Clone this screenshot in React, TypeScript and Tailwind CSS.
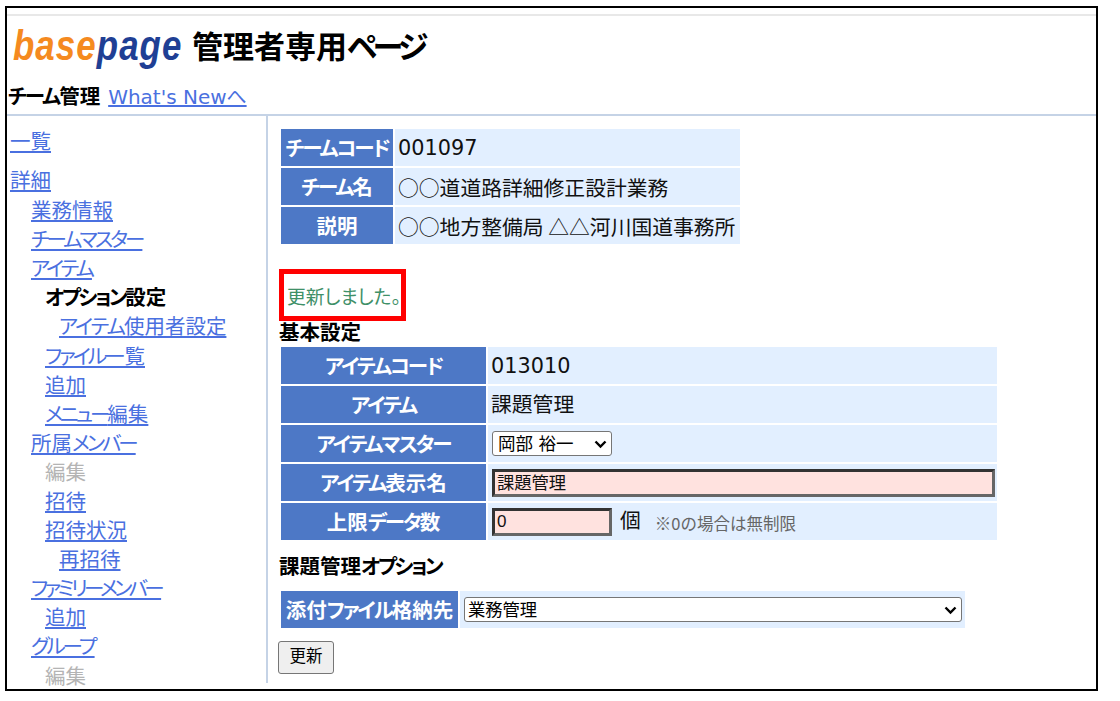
const Kana = ({ t, cls = "tracking-[-2px]" }: { t: string; cls?: string }) => {
  const parts = t.split(/([ァ-ヶー]+)/);
  return (
    <>
      {parts.map((p, i) =>
        /^[ァ-ヶー]+$/.test(p) ? (
          <span key={i} className={`${cls} [font-feature-settings:'palt']`}>{p}</span>
        ) : (
          <span key={i}>{p}</span>
        )
      )}
    </>
  );
};

const nav: { t: string; pl: string; kind: "link" | "cur" | "off"; cls?: string }[] = [
  { t: "業務情報", pl: "pl-[21px]", kind: "link" },
  { t: "チームマスター", pl: "pl-[21px]", kind: "link" },
  { t: "アイテム", pl: "pl-[21px]", kind: "link" },
  { t: "オプション設定", pl: "pl-[35px]", kind: "cur" },
  { t: "アイテム使用者設定", pl: "pl-[49px]", kind: "link", cls: "tracking-[-2px]" },
  { t: "ファイル一覧", pl: "pl-[35px]", kind: "link" },
  { t: "追加", pl: "pl-[35px]", kind: "link" },
  { t: "メニュー編集", pl: "pl-[35px]", kind: "link" },
  { t: "所属メンバー", pl: "pl-[21px]", kind: "link" },
  { t: "編集", pl: "pl-[35px]", kind: "off" },
  { t: "招待", pl: "pl-[35px]", kind: "link" },
  { t: "招待状況", pl: "pl-[35px]", kind: "link" },
  { t: "再招待", pl: "pl-[49px]", kind: "link" },
  { t: "ファミリーメンバー", pl: "pl-[21px]", kind: "link", cls: "tracking-[-3.6px]" },
  { t: "追加", pl: "pl-[35px]", kind: "link" },
  { t: "グループ", pl: "pl-[21px]", kind: "link" },
  { t: "編集", pl: "pl-[35px]", kind: "off" },
];

const Label = ({ t }: { t: string }) => (
  <div className="flex items-center justify-center bg-[#4d78c6] pt-[3px] text-[20.5px] font-bold whitespace-nowrap text-white">
    <Kana t={t} />
  </div>
);

const Chevron = () => (
  <svg width="13" height="9" viewBox="0 0 13 9" className="shrink-0">
    <path d="M1.5 1.5 6.5 6.5 11.5 1.5" fill="none" stroke="#000" strokeWidth="2.4" />
  </svg>
);

const link = "text-[#4a70e0] underline";
const value = "flex items-center bg-[#e2efff] pl-[3px] pt-[3px] whitespace-nowrap";
const cjk = "[font-family:'Noto_Sans_CJK_JP',sans-serif]";

export default function App() {
  return (
    <div className="h-[701px] w-[1120px] overflow-hidden bg-white pl-[5px] pt-[6px] text-[20.8px] text-[#111] [font-family:'DejaVu_Sans','Noto_Sans_CJK_JP',sans-serif]">
      <div className="flex h-[685px] w-[1093px] flex-col border-2 border-black">
        {/* header */}
        <div className="h-[108px] shrink-0 border-b-2 border-[#c5d3e6]">
          <div className="mt-[6px] h-[2px] bg-[#e8e8e8]" />
          <div className="flex h-[60px] items-center pl-[6px]">
            <span className="inline-block w-[168px] shrink-0 origin-left scale-x-[0.83] text-[42px] leading-none font-bold tracking-[1.3px] whitespace-nowrap italic [font-family:'Liberation_Sans',sans-serif]">
              <span className="text-[#f58a1f]">base</span>
              <span className="text-[#1f3f94]">page</span>
            </span>
            <span className="ml-[11px] pt-[3px] text-[31px] font-bold whitespace-nowrap text-black">
              管理者専用<Kana t="ページ" cls="tracking-[-4.5px]" />
            </span>
          </div>
          <div className="mt-[6px] flex h-[30px] items-center pl-[1px]">
            <span className="text-[20.5px] font-bold whitespace-nowrap text-black"><Kana t="チーム管理" /></span>
            <a className={`ml-[8px] text-[20px] ${link}`}>What's Newへ</a>
          </div>
        </div>

        <div className="flex h-[567px] shrink-0">
          {/* sidebar */}
          <div className="w-[261px] shrink-0 border-r-2 border-[#c5d3e6] pl-[3px] pt-[12px] text-[20.5px] leading-[29.1px]">
            <a className={`mb-[9.9px] block ${link}`}>一覧</a>
            <a className={`mb-[1px] block ${link}`}>詳細</a>
            {nav.map((n, i) => (
              <div key={i} className={`${n.pl} whitespace-nowrap`}>
                {n.kind === "link" && <a className={link}><Kana t={n.t} cls={n.cls ?? "tracking-[-3px]"} /></a>}
                {n.kind === "cur" && <span className="font-bold text-black"><Kana t={n.t} cls="tracking-[-2.5px]" /></span>}
                {n.kind === "off" && <span className="text-[#b4b4b4]"><Kana t={n.t} /></span>}
              </div>
            ))}
          </div>

          {/* main */}
          <div className="min-w-0 flex-1 pl-[12px] pt-[13px]">
            <div className="ml-[1px] grid w-[459px] auto-rows-[37px] grid-cols-[112px_345px] gap-[2px]">
              <Label t="チームコード" />
              <div className={value}>001097</div>
              <Label t="チーム名" />
              <div className={`${value} ${cjk}`}>○○道道路詳細修正設計業務</div>
              <Label t="説明" />
              <div className={`${value} ${cjk}`}>○○地方整備局 △△河川国道事務所</div>
            </div>

            <div className="mt-[25px] ml-[-1px] flex h-[52px] w-[127px] items-end border-[5px] border-[#ff0000] pb-[6px] pl-[3px] text-[18.8px] leading-[24px] whitespace-nowrap text-[#3f9068] [font-feature-settings:'palt']">
              更新しました。
            </div>

            <div className="ml-[-1px] h-[26px] text-[20.5px] leading-[24px] font-bold text-black">基本設定</div>

            <div className="ml-[1px] grid w-[716px] auto-rows-[37px] grid-cols-[205px_509px] gap-[2px]">
              <Label t="アイテムコード" />
              <div className={value}>013010</div>
              <Label t="アイテム" />
              <div className={value}>課題管理</div>
              <Label t="アイテムマスター" />
              <div className="flex items-center bg-[#e2efff] pl-[4px]">
                <div className="flex h-[25px] w-[120px] items-center justify-between rounded-[3px] border border-[#767676] bg-white pt-[2px] pr-[4px] pl-[5px] text-[17.5px] text-black">
                  岡部 裕一
                  <Chevron />
                </div>
              </div>
              <Label t="アイテム表示名" />
              <div className="flex items-center bg-[#e2efff] pl-[4px]">
                <div className="flex h-[28px] w-[503px] items-center border-[3px] border-[#333] border-r-[#666] border-b-[#666] bg-[#ffe2df] pt-[2px] pl-[2px] text-[17.3px]">
                  課題管理
                </div>
              </div>
              <Label t="上限データ数" />
              <div className="flex items-center bg-[#e2efff] pl-[4px]">
                <div className="flex h-[28px] w-[120px] items-center border-[3px] border-[#333] border-r-[#666] border-b-[#666] bg-[#ffe2df] pl-[2px] text-[17px] [font-family:'Liberation_Sans',sans-serif]">
                  0
                </div>
                <span className="ml-[8px]">個</span>
                <span className={`ml-[14px] pt-[3px] text-[16.5px] text-[#666] ${cjk}`}>※0の場合は無制限</span>
              </div>
            </div>

            <div className="mt-[14px] ml-[-1px] text-[20.5px] leading-[26px] font-bold text-black">
              課題管理<Kana t="オプション" cls="tracking-[-2.5px]" />
            </div>

            <div className="mt-[11px] ml-[1px] grid w-[684px] auto-rows-[37px] grid-cols-[177px_505px] gap-[2px]">
              <Label t="添付ファイル格納先" />
              <div className="flex items-center bg-[#e2efff] pl-[4px]">
                <div className="flex h-[25px] w-[498px] items-center justify-between rounded-[3px] border border-[#767676] bg-white pt-[2px] pr-[4px] pl-[3px] text-[17.3px] text-black">
                  業務管理
                  <Chevron />
                </div>
              </div>
            </div>

            <button className="mt-[13px] ml-[-2px] block h-[33px] w-[56px] rounded-[3px] border border-[#767676] bg-[#efefef] text-[16.5px] text-black">
              更新
            </button>
          </div>
        </div>
      </div>
    </div>
  );
}
